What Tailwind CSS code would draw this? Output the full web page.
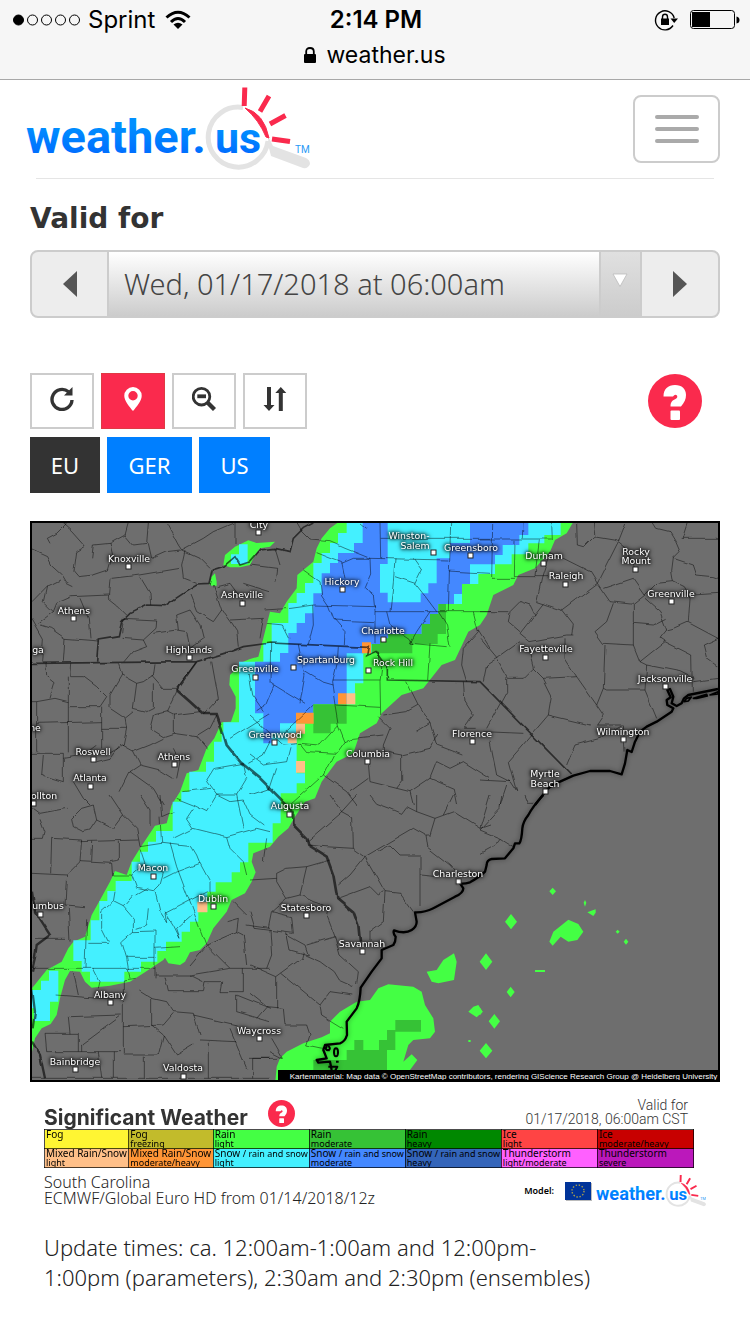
<!DOCTYPE html>
<html lang="en">
<head>
    <meta charset="UTF-8">
    <meta name="viewport" content="width=device-width, initial-scale=1.0">
    <title>weather.us - Significant Weather South Carolina</title>
    <script src="https://cdn.jsdelivr.net/npm/@tailwindcss/browser@4"></script>
</head>
<body class="bg-white font-['Noto_Sans',sans-serif] text-[#333]">
    <!-- Shared symbols -->
    <svg class="absolute w-0 h-0" aria-hidden="true">
        <defs>
            <linearGradient id="logoBlue" x1="0" y1="0" x2="0" y2="1">
                <stop offset="0.3" stop-color="#0090ff"/>
                <stop offset="0.9" stop-color="#0068ff"/>
            </linearGradient>
        </defs>
        <symbol id="logo" viewBox="26 86 284 86" overflow="visible">
            <path d="M243 107.500A30 30 0 1 0 268 141" fill="none" stroke="#e3e3e3" stroke-width="5"/>
            <path d="M268 136L268.500 146L271 156L303 168Q308 169 310 164Q310 160 306 158L273 146Z" fill="#e3e3e3"/>
            <path d="M245 108Q264 113 269 138L266 137Q259 120 245 108Z" fill="#fa2a4d" stroke="#fa2a4d"/>
            <path d="M244.800 87.500L244.200 106M269 96L260 111.500M285.500 115.500L270 124M272 139L290 141.500" stroke="#fa2a4d" stroke-width="5"/>
            <text x="26" y="153" fill="url(#logoBlue)" class="font-['Roboto'] font-bold text-[47px]">weather.</text>
            <text x="215" y="153" fill="url(#logoBlue)" class="font-['Roboto'] font-bold text-[43px]">us</text>
            <text x="295" y="153" fill="#2a9af5" class="font-['Roboto'] text-[10px]">TM</text>
        </symbol>
        <symbol id="help" viewBox="0 0 54 54">
            <circle cx="27" cy="27" r="27" fill="#fa2a4d"/>
            <path d="M15.500 22.500C15.500 15 20 11 27 11C34 11 38 15 38 21C38 25 36.500 28.500 33 32.500H22.500C22.500 27.500 25 26 27.500 25Q30 23.500 29 21.500Q27 19.500 25 22.500Z" fill="#fff"/>
            <rect x="22.500" y="36.500" width="9.500" height="9.500" rx="1" fill="#fff"/>
        </symbol>
    </svg>

    <!-- Browser status bar -->
    <header class="bg-[#f6f6f6] border-b border-[#a8a8a8] text-black font-['Inter',sans-serif] text-2xl h-20">
        <div class="grid grid-cols-3 items-center h-10 pl-3 pr-2.5">
            <div class="flex items-center gap-2">
                <svg class="w-[68px] h-3" viewBox="0 0 68 12" fill="none" stroke="#000">
                    <circle cx="6.500" cy="6" r="5" fill="#000"/>
                    <circle cx="20.500" cy="6" r="5"/><circle cx="34.500" cy="6" r="5"/><circle cx="48.500" cy="6" r="5"/><circle cx="62.500" cy="6" r="5"/>
                </svg>
                <span>Sprint</span>
                <svg class="w-[26px] h-5 ml-0.5" viewBox="0 0 26 20" fill="none" stroke="#000" stroke-width="3">
                    <path d="M1.500 7.500Q13 -3 24.500 7.500M6 12Q13 5 20 12"/>
                    <path d="M13 19L8.500 14.500Q13 11 17.500 14.500Z" fill="#000" stroke="none"/>
                </svg>
            </div>
            <div class="text-center font-semibold">2:14 PM</div>
            <div class="flex items-center justify-end gap-3">
                <svg class="w-6 h-6" viewBox="0 0 24 24" fill="none" stroke="#000" stroke-width="1.400">
                    <path d="M19 17.500A9.500 9.500 0 1 1 20.200 10"/>
                    <path d="M16.500 10.500H24L20.200 15Z" fill="#000" stroke="none"/>
                    <rect x="7" y="10.500" width="8" height="6.500" fill="#000" stroke="none"/>
                    <path d="M8.500 11V9Q8.500 6.300 11 6.300T13.500 9V11"/>
                </svg>
                <svg class="w-[50px] h-5" viewBox="0 0 50 20" fill="none" stroke="#000">
                    <rect x="0.500" y="0.500" width="44" height="18" rx="3"/>
                    <rect x="2" y="2" width="18" height="15" fill="#000" stroke="none"/>
                    <path d="M46.500 6.500Q49.500 7 49.500 10T46.500 13.500Z" fill="#000" stroke="none"/>
                </svg>
            </div>
        </div>
        <div class="flex items-center justify-center gap-2.5 h-[30px] text-[23px]">
            <svg class="w-3 h-4" viewBox="0 0 12 16">
                <rect x="0" y="7" width="12" height="9" rx="1"/>
                <path d="M2.200 8V4.500Q2.200 1 6 1T9.800 4.500V8" fill="none" stroke="#000" stroke-width="1.800"/>
            </svg>
            <span>weather.us</span>
        </div>
    </header>

    <main class="px-[30px]">
        <!-- Site header -->
        <div class="flex items-center justify-between h-[98px] -ml-1">
            <a href="#" aria-label="weather.us" class="block"><svg class="w-[284px] h-[86px]"><use href="#logo"/></svg></a>
            <button aria-label="Menu" class="flex flex-col items-center justify-center gap-2 w-[87px] h-[68px] rounded-lg border-2 border-[#ccc]">
                <span class="block w-11 h-1 rounded bg-[#aaa]"></span>
                <span class="block w-11 h-1 rounded bg-[#aaa]"></span>
                <span class="block w-11 h-1 rounded bg-[#aaa]"></span>
            </button>
        </div>
        <hr class="mx-1.5 border-[#e5e5e5]">

        <!-- Time picker -->
        <label for="validTime" class="block mt-[22px] leading-9 text-[28px] font-bold font-['DejaVu_Sans',sans-serif]">Valid for</label>
        <div class="flex mt-[13px] h-[68px] rounded-lg border-2 border-[#ccc] bg-[#ededed] overflow-hidden">
            <button aria-label="Previous" class="w-[77px] flex items-center justify-center border-r-2 border-[#ccc]">
                <svg class="w-[14px] h-[26px]" viewBox="0 0 14 26"><path d="M14 0V26L0 13Z" fill="#555"/></svg>
            </button>
            <div class="relative flex-1">
                <select id="validTime" class="appearance-none w-full h-full pl-[15px] text-[29px] font-light text-[#444] bg-linear-to-b from-white to-[#ccc]">
                    <option>Wed, 01/17/2018 at 06:00am</option>
                </select>
                <span class="absolute right-0 inset-y-0 w-[41px] pt-[21px] pl-[11px] bg-linear-to-b from-[#e0e0e0] to-[#ccc] border-l-2 border-[#ccc] pointer-events-none">
                    <svg class="w-4 h-[15px]" viewBox="0 0 16 15"><path d="M1 1H15L8 13.500Z" fill="#fff" stroke="#bbb" stroke-width="0.800"/></svg>
                </span>
            </div>
            <button aria-label="Next" class="w-[78px] flex items-center justify-center border-l-2 border-[#ccc]">
                <svg class="w-[14px] h-[26px]" viewBox="0 0 14 26"><path d="M0 0V26L14 13Z" fill="#555"/></svg>
            </button>
        </div>

        <!-- Map tools -->
        <div class="flex justify-between mt-[55px]">
            <div class="flex gap-[7px]">
                <button aria-label="Reload" class="flex items-center justify-center w-16 h-14 pb-1 border-2 border-[#ccc]">
                    <svg class="w-6 h-6" viewBox="0 0 24 24"><path d="M22 13A10 10 0 1 1 18.500 4.800" fill="none" stroke="#333" stroke-width="3.400"/><path d="M22.500 0V8.500H14Z" fill="#333"/></svg>
                </button>
                <button aria-label="Show places" class="flex items-center justify-center w-16 h-14 pb-1 border border-[#e03a44] bg-[#fa2a4d]">
                    <svg class="w-[18px] h-6" viewBox="0 0 18 24"><path fill-rule="evenodd" d="M9 0A8.700 8.700 0 0 1 17.700 9C17.700 13.500 12.500 20 9 24C5.500 20 .3 13.500 .3 9A8.700 8.700 0 0 1 9 0ZM9 4A4.700 4.700 0 1 0 9 13.400A4.700 4.700 0 1 0 9 4Z" fill="#fff"/></svg>
                </button>
                <button aria-label="Zoom out" class="flex items-center justify-center w-16 h-14 pb-1 border-2 border-[#ccc]">
                    <svg class="w-6 h-6" viewBox="0 0 24 24" stroke="#333" fill="none"><circle cx="9.500" cy="9.700" r="8.300" stroke-width="2.800"/><path d="M5.300 9.300H14" stroke-width="3.800"/><path d="M15 15L22.500 22.500" stroke-width="4.300"/></svg>
                </button>
                <button aria-label="Swap" class="flex items-center justify-center w-16 h-14 pb-1 border-2 border-[#ccc]">
                    <svg class="w-6 h-6" viewBox="0 0 24 24" fill="#333"><path d="M4 0H8V18H11.500L6 24L.5 18H4ZM15.800 24H19.800V6H23.300L17.800 0L12.300 6H15.800Z"/></svg>
                </button>
            </div>
            <button aria-label="Help" class="mr-[18px]"><svg class="w-[54px] h-[54px]"><use href="#help"/></svg></button>
        </div>
        <div class="flex gap-[7px] mt-2 h-14 text-white text-[22px]">
            <button class="w-[70px] bg-[#333]">EU</button>
            <button class="w-[85px] bg-[#007fff]">GER</button>
            <button class="w-[71px] bg-[#007fff]">US</button>
        </div>

        <!-- Forecast map -->
        <svg class="block w-full mt-7" viewBox="0 18 2070 1683" role="img" aria-label="Significant weather map">
            <defs>
                <filter id="rough" x="0" y="0" width="100%" height="100%">
                    <feTurbulence type="fractalNoise" baseFrequency="0.02" numOctaves="2" seed="4"/>
                    <feDisplacementMap in="SourceGraphic" scale="12" xChannelSelector="R" yChannelSelector="G"/>
                </filter>
            </defs>
            <rect x="0" y="18" width="2070" height="1683" fill="#6e6e6e"/>

            <!-- Light rain -->
            <g fill="#44ff44">
                <path d="M922 24L900 40L875 70L860 100L850 140L820 165L802 180L800 220L770 260L750 295L720 290L710 330L700 370L685 425L660 432L640 440L600 480L598 510L617 545L617 580L603 620L575 622L553 670L530 700L505 765L470 775L450 830L425 870L410 925L375 932L350 970L330 1000L305 1040L290 1080L255 1068L240 1100L210 1155L185 1200L165 1265L130 1280L115 1300L95 1340L50 1365L6 1420V1610L15 1570L35 1540L62 1527L80 1500L90 1450L105 1395L120 1368L150 1370L165 1400L185 1418L240 1412L300 1400L340 1375L400 1335L405 1328L415 1345L450 1350L465 1340L480 1312L510 1305L530 1285L550 1240L590 1190L605 1155L645 1135L665 1100L677 1072L665 1040L670 1015L720 995L745 965L775 940L795 905L825 860L855 850L875 800L920 740L970 715L990 655L1040 625L1055 595L1115 540L1180 520L1235 450L1275 435L1315 350L1350 330L1370 300L1390 240L1450 210L1465 180L1515 160L1560 110L1575 75L1610 55L1628 24Z"/>
                <path d="M580 150L585 120L615 95L655 76L680 84L735 80L720 95L690 100L675 120L660 150L630 157L600 157ZM538 208L545 185L555 175L560 200V212H545Z"/>
                <g transform="translate(660 840)">
                    <path d="M76 860L80 815L90 790L110 770L160 745L215 727L240 715V680L270 650L320 620L360 615L385 580L415 568L490 575L515 590L525 630L550 670L555 710L540 730L490 735L475 750L460 800L485 778L502 795L480 825L420 860Z"/>
                    <path d="M530 530L560 525L580 495L612 475L620 500L612 555L565 565L545 560ZM655 650L670 635L685 630L698 650L680 667ZM655 735H662V741H655Z"/>
                </g>
                <path transform="translate(1350 840)" d="M218 278l10 11l-10 11l-10-11zM315 315l4 8l-4 12l-4-12zM322 352L340 345L347 343V353L340 363ZM93 357l18 23l-18 23l-18-23zM18 475l19 25l-19 25l-19-25zM208 440L220 410L265 374L295 387L310 410L292 435L265 440L242 425L218 452ZM413 404l6 6l-6 6l-6-6zM438 431l7 9l-7 9l-7-9zM165 525h30v6h-30zM92 575l12 16l-12 16l-12-16zM0 639l8 11l-8 11l-8-11zM43 657l17 22l-17 22l-17-22zM18 744l19 23l-19 23l-19-23z"/>
            </g>
            <!-- Light snow -->
            <path fill="#44f0ff" d="M950 24V54H924V84H900V114H875V144H850V204H825V234H800V264H775V324H725V384H700V440H627V622H580V650H575V680H552V740H528V770H478V830H454V860H428V948H378V980H354V1010H330V1040H305V1098H257V1128H232V1158H208V1216H182V1276H130V1338H155V1370H180V1400H283V1370H333V1340H382V1308H408V1280H455V1250H480V1220H505V1190H532V1130H557V1102H605V1072H630V1042H655V983H728V925H752V835H800V805H825V775H800V595H850V568H975V505H1000V415H1025V357H1175V327H1200V297H1225V267H1296V207H1345V177H1395V148H1445V118H1495V85H1543V60H1592V24ZM603 147V118H627V88H653V147ZM57 1367H85V1460H60V1518H12V1480H6V1425H33V1397H57Z"/>
            <!-- Moderate snow -->
            <path fill="#4488ff" fill-rule="evenodd" transform="translate(660 0)" d="M338 24V84H312V114H264V144H240V175H215V235H190V295H165V324H140V354H115V414H90V440H15V595H40V685H65V655H90V625H140V595H190V568H290V415H340V387H415V357H515V327H540V297H565V267H612V237H636V207H660V148H735V120H758V90H808V60H835V24ZM413 24H660V84H600V130H560V205H535V235H512V262H413V233H390V147H413Z"/>
            <!-- Moderate rain -->
            <path fill="#36c236" d="M1025 387H1050V370H1075V357H1175V327H1200V297H1225V267H1248V357H1223V387H1147V415H1025ZM850 568H950V626H902V655H850ZM850 1700V1635H950V1605H973V1575H1000V1605H1047V1575H1071V1545H1096V1515H1173V1550H1096V1605H1071V1700Z"/>
            <!-- Mixed -->
            <path fill="#ff9536" d="M924 535h26v33h-26zM798 593h53v33h-53zM996 382h27v33h-27z"/>
            <path fill="#ffbf88" d="M950 535h26v33h-26zM798 626h27v30h-27zM773 655h27v30h-27zM798 738h27v35h-27zM502 1160h30v32h-30z"/>

            <!-- County lines -->
            <g fill="none" stroke="#000" stroke-opacity="0.45" stroke-width="3" filter="url(#rough)">
                <path d="M6 105L50 125L62 150L95 180L110 205L130 215M60 85L52 70L80 55L105 30V18M95 24L125 50L165 95L140 110L132 170L145 185L190 180L235 165L245 130M185 130L190 90L240 85L285 60L295 24M285 60L310 90L350 85L355 24M240 85L250 130M365 130L410 110L450 105M355 85L365 130M410 24L445 90L455 105L510 130L540 160M465 105L455 150L460 190L500 205M455 105L520 70L550 50L610 24M615 24V90M245 190L330 180L450 160M330 185L360 235L362 270M240 190L235 250L260 270L290 300M6 260L50 215L90 195M50 215L40 260L70 290L25 325M70 290L80 265L125 245L235 240M180 370L175 310L150 250M6 310L40 370L35 440M30 330L62 340L105 370L100 440M105 370L205 378M275 355L280 310L380 315L378 340L340 375L275 370M340 375L350 395L310 410L285 440M370 355L440 345L470 350L480 400M440 300L480 285L510 330L520 370L480 400M440 300L445 345M480 240L500 290L550 320L575 285L550 210M575 285L600 320L620 350L625 395M600 315L700 310L690 370M560 215L600 205L640 260M640 205L720 230"/>
                <path d="M48 445L50 480L75 500L60 550M125 445L122 485H160L200 515L230 545L210 575H115M115 485V715M6 560H20V710M20 560L75 550L115 560M20 625L215 620M215 575V700M6 715H100V800M215 640H290L280 690L230 720M265 445L275 480L320 505L340 500L370 480L375 445M320 505L310 580L350 590L370 580V505M275 480L240 540V580L285 610L310 590M285 610L290 640M500 440L440 520H400L365 480M440 530L410 590L370 600L360 640L400 665L430 655V600L410 590M430 600L510 590M430 655L500 665L540 640L560 600M500 665L530 700M275 690L310 710L360 690L400 670M310 710L330 750L390 765L430 790M330 750L300 770L270 830M40 720L35 780L100 800M100 730L160 720L200 690M130 800L160 850L180 870M200 740L240 730L270 690M300 770L370 820L400 870M430 700L450 740L440 790M545 440L565 550L520 600M600 670L720 595M530 800L555 760L640 745L650 790L620 840H560L530 800M460 830L540 820M655 480L665 540L700 590M655 745L700 720L720 680"/>
                <path transform="translate(660 0)" d="M140 24L155 50L180 75L240 80L285 100L360 130M90 150L75 100M0 150L80 160L75 200M160 165L210 200L215 240L235 270L250 310L285 350L283 390M200 110L275 140L285 190M275 145L310 130H360L362 180L345 220L370 240L375 290M360 130L595 135M435 130L430 200L420 290M390 24L392 130M392 70H720M602 24L595 290M595 168L720 175M435 185L495 205L530 250L560 290M490 130L515 165L495 205M350 40L330 24M40 285L120 280L190 270L375 275M188 270L190 330L175 388M250 315L370 320M375 290V385M375 290H720M410 290L420 330L480 370L490 390M540 290L500 350L480 385L590 395M565 290L590 330L600 395M540 385L533 495M50 325L100 330L120 370M62 385L60 500L75 510L165 565M145 388L155 440L165 480L150 565M165 470L215 500L250 510M265 395L262 440L248 500L258 570M248 495H390M258 570L390 577M385 410L395 460L390 500L392 600M75 510L50 570L20 590M0 600L100 690L150 685M190 570L100 655M255 570L265 630L285 680M265 630L210 690L150 685L170 710L260 715L285 680L310 670L400 660M250 720L220 780L120 870M220 780L290 830L320 870M400 600L470 590L505 570L485 530L470 500M505 570L540 625L500 650M540 625L560 690L640 720M640 500L645 560L670 600L640 640H680M670 290L685 350L640 400L635 450L650 500M685 345L720 400M385 605L420 640L400 690V710L455 720L540 700L560 660M355 740L360 800L440 820L455 800V720M355 790L300 830M440 820L480 830L540 790L560 740L600 760L640 740L720 790M480 830L490 870M540 790L610 820L620 870M0 720L40 750L110 740L120 700M0 840L60 820L80 760"/>
                <path transform="translate(1350 0)" d="M0 72H215M38 24L35 190M132 24L130 70M215 24L217 75M105 75L103 185H205M35 190H105M178 75L165 185M170 260L185 190L210 110L240 125L290 150L330 170L352 205M290 24L292 90L310 95L340 65L400 75L415 80M340 24L345 65M437 24L415 80L352 205M415 80L440 100L470 170M352 205L245 285M170 260L245 285L280 330L275 360M352 205L390 260L460 268L495 240L460 190L370 220M520 24L530 40L570 50L585 75L600 110L580 130L575 170L580 200M605 70H714M625 24L610 70M580 130L640 150L650 180L700 185L714 190M495 240L530 205L580 200L610 215L630 250L625 320L580 340L560 345L540 290L495 250M640 240L714 235M620 320L714 370M400 265L380 320L345 350L370 385L460 390V270M460 325L520 330L560 310M460 390L480 440L555 380L540 370L560 345M555 380L635 420L637 530M480 440L500 450L600 470L640 490M714 370L670 390L680 430L714 455M640 500L714 490M375 390L370 520L380 525H495L530 610M495 525L500 450M370 520L350 570L370 600L350 630H430M190 265L120 355L150 380L260 360H280M165 300L150 270L120 260L90 290L85 320L120 350M0 290H85M0 370L25 400L50 430L85 490H130L160 460M50 430L120 380M50 430L20 450L10 500M80 490V530L20 640M160 460L190 490L290 485L350 570M160 460L145 400M255 370V430L290 485M190 490L215 540L205 600L120 700L85 740L110 830M205 600L330 630M260 750L285 690L360 670L430 630L435 710M10 650L130 655M30 680L50 780L90 800L110 830M0 795L90 800M60 870L80 810"/>
                <path transform="translate(0 840)" d="M10 40L30 55L110 40M30 70L45 110L40 130H6M125 70L155 40L190 30L200 75L180 105L160 110L130 95L125 70M200 75L250 100L280 60L240 0M280 60L320 100L330 155M65 130L155 135L150 200M65 130L62 235M6 235L110 240L150 200L245 205L248 240M110 240L105 330L165 335M188 140L185 200M150 140L325 135M268 140V195L240 200M330 0L360 45V90M390 0L395 65L430 50M390 65L395 145L330 155M248 240H305L345 205L330 160M305 240L320 280L370 290L390 270L400 235L345 210M395 145L485 155L500 180L510 205L430 235L400 250M420 145L440 215L528 450M490 40L470 70L490 100L430 130M490 100L590 125M510 205L540 260V300M590 125L600 160L640 200L650 240M590 125L680 100L720 110M440 10L490 30L530 50L560 0M620 0L640 100M560 0L600 20L640 15L660 60L700 90"/>
                <path transform="translate(0 840)" d="M170 370L165 520M115 340L120 440M15 430H105M6 520H375M190 520L210 560L205 580M175 445H235M255 290L250 320L280 335L310 300M250 320L215 350V400L235 440M280 335L310 370V410L275 440L290 490L300 550M310 410L375 408V550M290 487H375M375 290L390 350L410 380L405 355L530 290M320 300L355 280M355 340L350 390L320 400M405 350L430 390L450 430L440 400L485 360M375 460L450 455M280 555V780H385L400 720L365 690V610M280 555L320 550M375 540H480L520 560M325 585L365 610L410 620L430 650L490 655L510 720M405 545L415 590H520L525 560H570M280 695L400 690L430 655M120 665L275 660M80 600L205 610H275M45 715H145V770H50ZM145 770H270M155 770V750L270 665M115 665L120 715M205 770L215 850M250 770V850M343 785V850M400 720L440 780L490 750M510 735L620 740M535 740V850M490 660L620 690M575 560L570 590H640V520M480 510L530 450L620 410M530 450L600 520L480 540M600 520H720M620 410L625 370L590 380M620 410L640 420L650 510M650 390L720 400M650 360L610 320M620 600L720 640M620 600V650L720 680M600 700L650 820M668 850V790H720M130 530L145 600M6 850H720"/>
                <path transform="translate(660 840)" d="M170 140L275 50L320 0M275 50L308 68L310 160M240 0L275 50M360 0L380 25L420 40L455 55L470 35L500 50V0M500 50L555 70L540 120L525 120M175 150L225 155L310 160L345 185M265 270L300 240L345 185L490 100L525 120L530 155L600 210L625 240M345 185L405 290L450 295L490 350M385 170L420 150L450 180H510V330M510 240L560 245M555 70L610 50L690 100L720 90M690 100L720 0M580 60L610 0M405 290L400 380L360 410V440M265 310L360 275L385 300L400 290M80 235L110 220L170 215L150 300L110 310L80 260V235M0 255L80 250M150 300L190 320L220 330M110 310L65 350L55 400M170 215L240 195M50 130L40 200M0 350L15 400L130 415L125 365L65 350M60 405L65 480L50 520M0 510L80 545L155 490L160 470M110 415L120 465L175 480L165 450L110 420M170 450L255 425L230 360L235 330M255 425L270 480L325 530L320 570M165 480L210 500L250 530L265 555L310 575M80 545V640M95 535L210 630L240 590L310 600M210 630L215 660L280 700M0 595L50 635L20 670M50 635L100 640L105 690H170L180 720L170 750L240 765M65 730L100 790L60 770M0 790H100"/>
                <path transform="translate(1350 840)" d="M65 0L60 40L0 105L60 130L100 155M0 175L45 150L60 130M135 0L145 25H165"/>
            </g>
            <!-- State lines -->
            <g fill="none" stroke="#000" stroke-opacity="0.6" stroke-width="5" filter="url(#rough)">
                <path d="M6 445L500 440L600 410L640 395L720 384L1015 397L1010 425L1040 410L1072 455V495L1350 500L1625 780M200 440L205 375L265 365L275 320L300 295L350 270L405 272L460 235L500 210L540 208L550 165L580 155L615 125L630 150L660 140L690 105L735 100L780 110L790 70L820 40L850 24M500 440L440 525"/>
                <path stroke-width="8" d="M440 525L480 560L520 597H560L575 640L590 690L630 740L690 790L775 875L790 900V930L830 970L835 990L890 1025L910 1080L922 1150L970 1190L985 1230L990 1280"/>
                <path stroke-width="7" d="M6 1130L15 1190L60 1260L20 1290L15 1330L6 1370M6 1420L15 1490L8 1540M6 1580L30 1620L45 1690"/>
            </g>
            <!-- Coast -->
            <g fill="none" stroke="#000" stroke-width="7" stroke-linejoin="round" class="[filter:drop-shadow(0_0_8px_#0006)]">
                <path d="M1515 870L1550 825Q1570 806 1590 800L1630 782L1680 768H1740L1775 778L1785 745L1792 705L1805 711L1815 680L1830 650L1850 635L1880 620L1925 590L1930 580L1912 570L1910 555L1922 547L1912 525L1920 522L1930 545L1925 565L1940 573L1955 565L1962 550L1975 540L2064 522"/>
                <path d="M1962 560L1970 550L1984 546L1975 558ZM1990 550L2030 538L2032 543L2000 550ZM2040 540L2064 530V537Z" stroke-width="5"/>
                <path d="M1540 840Q1510 872 1495 900Q1479 920 1477 940Q1475 975 1468 985L1455 985L1450 1000L1425 1030L1385 1032Q1370 1035 1370 1050L1365 1070Q1350 1085 1320 1102Q1300 1108 1290 1105L1300 1120Q1300 1135 1275 1145L1210 1180Q1185 1193 1155 1192L1160 1220Q1160 1235 1145 1245Q1125 1258 1092 1246Q1088 1255 1097 1265Q1097 1280 1090 1290L1055 1305V1330L1025 1370L992 1418Q990 1460 980 1480L950 1520L951 1560Q945 1580 930 1585L885 1590L880 1605L890 1630L860 1635L865 1643L900 1640L905 1665"/>
                <path d="M893 1594a6 6 0 1 0 1 0M912 1612a6 12 0 1 0 12 0a6 12 0 1 0 -12 0M918 1640h8M895 1655H922L915 1668" stroke-width="6"/>
            </g>

            <g id="cities" fill="#fff" text-anchor="middle" class="font-['DejaVu_Sans'] text-[28px]"></g>

            <rect x="744" y="1665" width="1326" height="36"/>
            <text x="2062" y="1691" fill="#fff" text-anchor="end" class="font-['Liberation_Sans'] text-[24px]">Kartenmaterial: Map data © OpenStreetMap contributors, rendering GIScience Research Group @ Heidelberg University</text>
            <rect x="3" y="21" width="2064" height="1677" fill="none" stroke="#000" stroke-width="6"/>
        </svg>

        <!-- Legend -->
        <section class="ml-[14px] mr-[26px] mt-3.5">
            <div class="flex justify-between h-[33px]">
                <div class="flex gap-5">
                    <h2 class="pt-2 leading-7 text-[21px] font-bold font-['Inter',sans-serif]">Significant Weather</h2>
                    <button aria-label="About significant weather" class="h-[27px] mt-1"><svg class="w-[27px] h-[27px]"><use href="#help"/></svg></button>
                </div>
                <p class="mr-1.5 text-right text-[14px] leading-[14px] pt-0.5 font-light font-['Roboto',sans-serif]">Valid for<br>01/17/2018, 06:00am CST</p>
            </div>
            <table class="w-full table-fixed border-collapse text-black text-[10px] leading-[9px] whitespace-nowrap">
                <colgroup><col class="w-[13%]"><col class="w-[13%]"><col><col><col><col><col></colgroup>
                <tr>
                    <td class="border border-black/70 bg-[#fff533] p-0 pl-px"><div class="h-[18px] overflow-hidden">Fog</div></td>
                    <td class="border border-black/70 bg-[#c2bb2b] p-0 pl-px"><div class="h-[18px] overflow-hidden">Fog<br><span class="text-[9px]">freezing</span></div></td>
                    <td class="border border-black/70 bg-[#44ff44] p-0 pl-px"><div class="h-[18px] overflow-hidden">Rain<br><span class="text-[9px]">light</span></div></td>
                    <td class="border border-black/70 bg-[#36c236] p-0 pl-px"><div class="h-[18px] overflow-hidden">Rain<br><span class="text-[9px]">moderate</span></div></td>
                    <td class="border border-black/70 bg-[#008800] p-0 pl-px"><div class="h-[18px] overflow-hidden">Rain<br><span class="text-[9px]">heavy</span></div></td>
                    <td class="border border-black/70 bg-[#ff4444] p-0 pl-px"><div class="h-[18px] overflow-hidden">Ice<br><span class="text-[9px]">light</span></div></td>
                    <td class="border border-black/70 bg-[#c80000] p-0 pl-px"><div class="h-[18px] overflow-hidden">Ice<br><span class="text-[9px]">moderate/heavy</span></div></td>
                </tr>
                <tr>
                    <td class="border border-black/70 bg-[#ffbf88] p-0 pl-px"><div class="h-[18px] overflow-hidden">Mixed Rain/Snow<br><span class="text-[9px]">light</span></div></td>
                    <td class="border border-black/70 bg-[#ff9536] p-0 pl-px"><div class="h-[18px] overflow-hidden">Mixed Rain/Snow<br><span class="text-[9px]">moderate/heavy</span></div></td>
                    <td class="border border-black/70 bg-[#44f0ff] p-0 pl-px"><div class="h-[18px] overflow-hidden">Snow <span class="text-[9px]">/ rain and snow<br>light</span></div></td>
                    <td class="border border-black/70 bg-[#4488ff] p-0 pl-px"><div class="h-[18px] overflow-hidden">Snow <span class="text-[9px]">/ rain and snow<br>moderate</span></div></td>
                    <td class="border border-black/70 bg-[#3465ba] p-0 pl-px"><div class="h-[18px] overflow-hidden">Snow <span class="text-[9px]">/ rain and snow<br>heavy</span></div></td>
                    <td class="border border-black/70 bg-[#ff60ff] p-0 pl-px"><div class="h-[18px] overflow-hidden">Thunderstorm<br><span class="text-[9px]">light/moderate</span></div></td>
                    <td class="border border-black/70 bg-[#bb18bb] p-0 pl-px"><div class="h-[18px] overflow-hidden">Thunderstorm<br><span class="text-[9px]">severe</span></div></td>
                </tr>
            </table>
            <div class="flex justify-between mt-1.5 -mr-3">
                <p class="text-[16px] leading-4 font-light text-[#222]">South Carolina<br>ECMWF/Global Euro HD from 01/14/2018/12z</p>
                <div class="flex items-center h-[34px]">
                    <span class="mr-[11px] text-[9px] font-semibold text-black">Model:</span>
                    <svg class="w-[27px] h-[19px] mr-1" viewBox="0 0 27 19">
                        <rect x="1" y="1" width="26" height="18" fill="#bbb"/>
                        <rect width="26" height="18" fill="#039"/>
                        <circle cx="13" cy="9" r="6" fill="none" stroke="#a99f4c" stroke-width="1.400" stroke-dasharray="1.400 1.740"/>
                    </svg>
                    <svg class="w-[110px] h-[34px]"><use href="#logo"/></svg>
                </div>
            </div>
            <p class="mt-6 text-[22px] leading-[30px] font-light text-[#222]">Update times: ca. 12:00am-1:00am and 12:00pm-<br>1:00pm (parameters), 2:30am and 2:30pm (ensembles)</p>
        </section>
    </main>

    <script>
        // label, label x, baseline y, marker x, marker y
        const cities = [
            ['City', 259, 528, 258, 532], ['Knoxville', 129, 562, 128, 566], ['Athens', 74, 614, 73, 618],
            ['Asheville', 242, 598, 242, 603], ['Highlands', 189, 653, 189, 657], ['ga', 38, 653],
            ['Greenville', 255, 672, 255, 677], ['Spartanburg', 326, 663, 293, 667], ['Rock Hill', 393, 666, 368, 670],
            ['Charlotte', 383, 634, 383, 639], ['Hickory', 342, 585, 342, 589], ['Winston-', 409, 539],
            ['Salem', 415, 549, 433, 552], ['Greensboro', 471, 551, 470, 555], ['Durham', 544, 559, 543, 563],
            ['Raleigh', 566, 579, 565, 584], ['Rocky', 636, 555], ['Mount', 636, 564, 635, 569],
            ['Greenville', 671, 597, 671, 601], ['Fayetteville', 546, 652, 545, 657], ['Jacksonville', 665, 682, 665, 686],
            ['Wilmington', 623, 735, 623, 739], ['Myrtle', 545, 777], ['Beach', 545, 787, 545, 791],
            ['Florence', 472, 737, 472, 741], ['Columbia', 368, 757, 367, 761], ['Greenwood', 275, 738, 274, 742],
            ['Roswell', 93, 755, 93, 759], ['Atlanta', 90, 781, 90, 786], ['ollton', 44, 799, 33, 803],
            ['ne', 35, 731], ['Athens', 174, 760, 174, 764], ['Augusta', 290, 809, 289, 814],
            ['Macon', 153, 871, 153, 876], ['Dublin', 213, 902, 213, 906], ['umbus', 48, 909, 40, 914],
            ['Statesboro', 306, 911, 306, 915], ['Charleston', 458, 877, 458, 881], ['Savannah', 362, 947, 362, 951],
            ['Waycross', 259, 1034, 259, 1038], ['Albany', 110, 998, 110, 1002], ['Bainbridge', 75, 1065, 75, 1069],
            ['Valdosta', 183, 1071, 183, 1076]
        ];

        // The map is drawn at three units to the pixel
        const px = x => (x - 30) * 3;
        const py = y => (y - 515) * 3;

        document.getElementById('cities').innerHTML = cities.map(([name, x, y, mx, my]) => `
            <text x="${px(x)}" y="${py(y)}" class="[filter:drop-shadow(0_0_4px_#000)_drop-shadow(0_0_6px_#000)]">${name}</text>
            ${mx ? `<rect x="${px(mx) - 6}" y="${py(my) - 6}" width="15" height="15" stroke="#222" stroke-width="3"/>` : ''}
        `).join('');
    </script>
</body>
</html>
